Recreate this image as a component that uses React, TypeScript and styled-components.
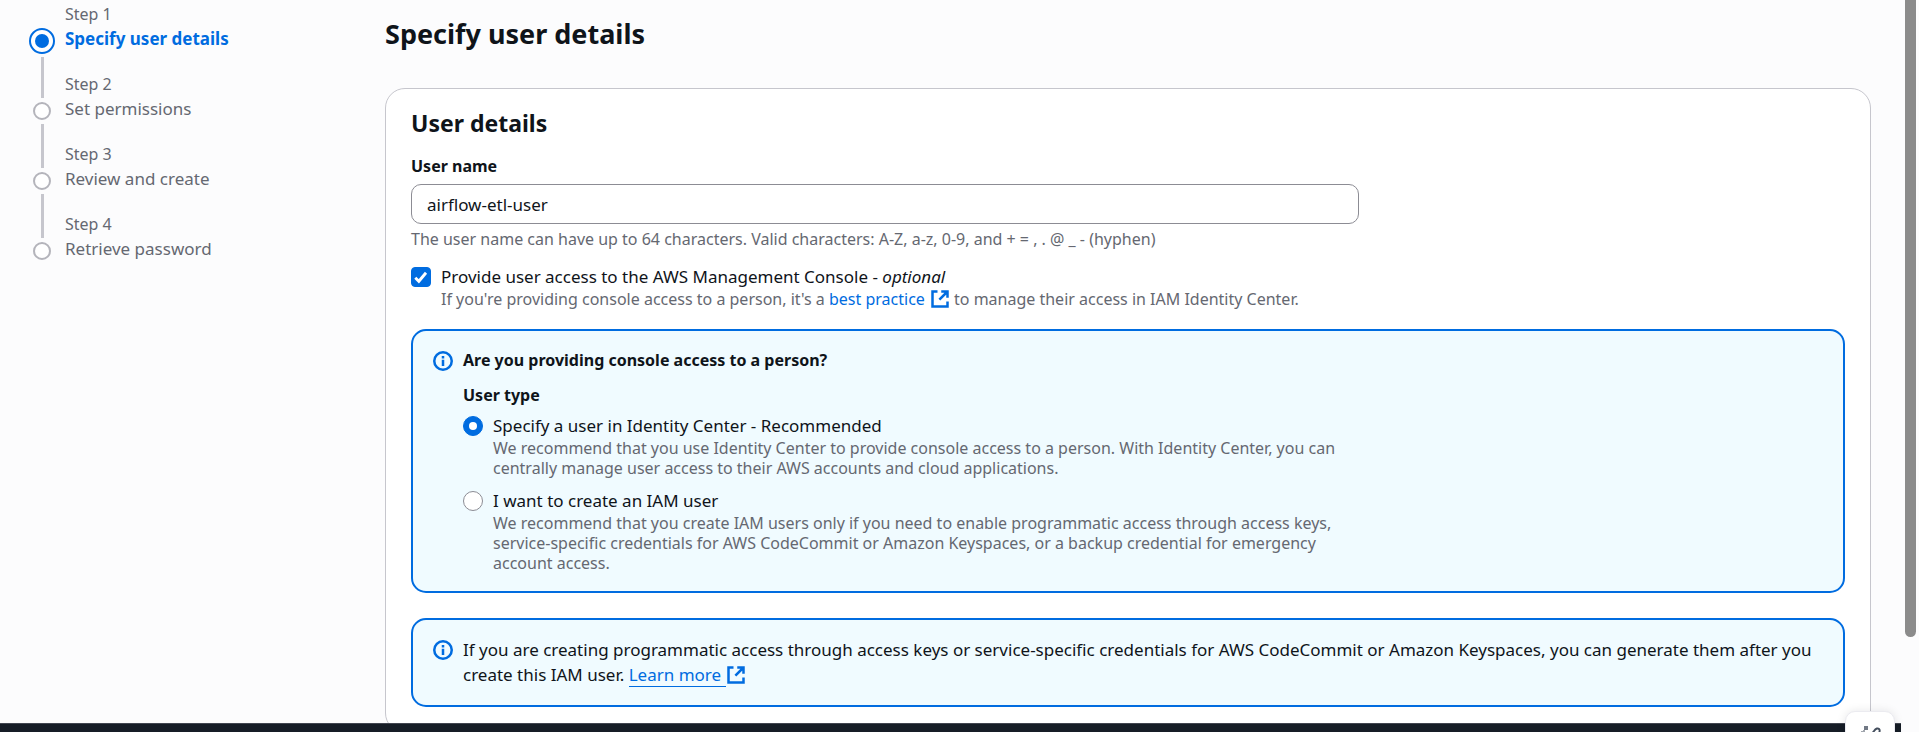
import React, { useState } from "react";
import styled, { createGlobalStyle, css } from "styled-components";

const color = {
  accent: "#006ce0",
  text: "#0f141a",
  muted: "#656871",
  line: "#c6c6cd",
  ring: "#b4b4bb",
  control: "#8c8c94",
  page: "#fcfcfd",
  info: "#f0fbff",
  footer: "#161d26",
};

const GlobalStyle = createGlobalStyle`
  *, *::before, *::after { box-sizing: border-box; }
  body {
    margin: 0;
    background: ${color.page};
    color: ${color.text};
    font: 17px/25px "Noto Sans", "Open Sans", sans-serif;
  }
  h1, h2, h3, p, ol, fieldset, legend { margin: 0; padding: 0; }
`;

const Shell = styled.div`
  display: flex;
  height: 100vh;
  overflow: hidden;
`;

const Screen = styled.div`
  position: relative;
  flex: 1;
  min-width: 0;
  display: flex;
  flex-direction: column;
`;

const Content = styled.div`
  flex: 1;
  min-height: 0;
  overflow: hidden;
  display: grid;
  grid-template-columns: 355px minmax(0, 1fr);
  column-gap: 30px;
  padding-right: 30px;
`;

const Steps = styled.ol`
  list-style: none;
  padding: 4px 0 0 29px;
`;

const Step = styled.li`
  display: grid;
  grid-template-columns: 26px 1fr;
  column-gap: 10px;
  height: 70px;
`;

const Marker = styled.div`
  display: flex;
  flex-direction: column;
  align-items: center;
`;

const Rail = styled.span<{ $grow?: boolean; $hidden?: boolean }>`
  width: 3px;
  background: ${(p) => (p.$hidden ? "transparent" : color.line)};
  ${(p) => (p.$grow ? "flex: 1;" : "height: 24px;")}
`;

const Dot = styled.span<{ $active?: boolean }>`
  flex: none;
  display: grid;
  place-items: center;
  width: 18px;
  height: 18px;
  margin: 4px 0;
  border: 2px solid ${color.ring};
  border-radius: 50%;
  background: #fff;
  ${(p) =>
    p.$active &&
    css`
      width: 26px;
      height: 26px;
      margin: 0 0 3px;
      border-color: ${color.accent};
      &::after {
        content: "";
        width: 14px;
        height: 14px;
        border-radius: 50%;
        background: ${color.accent};
      }
    `}
`;

const StepText = styled.div`
  display: flex;
  flex-direction: column;
  align-items: flex-start;
`;

const StepNumber = styled.span`
  font-size: 16px;
  line-height: 20px;
  color: ${color.muted};
`;

const StepLink = styled.a<{ $active?: boolean }>`
  margin-top: 2px;
  color: ${(p) => (p.$active ? color.accent : color.muted)};
  font-weight: ${(p) => (p.$active ? 700 : 400)};
  text-decoration: none;
`;

const Main = styled.main`
  min-width: 0;
  padding-top: 15px;
`;

const PageTitle = styled.h1`
  font-size: 27px;
  line-height: 38px;
  font-weight: 700;
`;

const Card = styled.section`
  margin-top: 35px;
  padding: 20px 25px 25px;
  border: 1px solid ${color.line};
  border-radius: 20px;
  background: #fff;
  display: flex;
  flex-direction: column;
`;

const CardTitle = styled.h2`
  font-size: 23px;
  line-height: 28px;
  font-weight: 700;
`;

const Field = styled.div`
  max-width: 948px;
  margin-top: 17px;
  display: flex;
  flex-direction: column;
`;

const FieldLabel = styled.label`
  font-size: 16px;
  font-weight: 700;
`;

const TextInput = styled.input`
  height: 40px;
  margin-top: 5px;
  padding: 0 15px;
  border: 1px solid ${color.control};
  border-radius: 10px;
  background: #fff;
  color: ${color.text};
  font: inherit;
`;

const Hint = styled.p`
  font-size: 16px;
  line-height: 20px;
  color: ${color.muted};
`;

const FieldHint = styled(Hint)`
  margin-top: 5px;
`;

const Option = styled.div`
  display: grid;
  grid-template-columns: 20px 1fr;
  column-gap: 10px;
`;

const ConsoleOption = styled(Option)`
  margin-top: 15px;
`;

const OptionBody = styled.div`
  min-width: 0;
`;

const OptionLabel = styled.label`
  display: block;
`;

const controlBox = css`
  appearance: none;
  display: grid;
  place-items: center;
  width: 20px;
  height: 20px;
  margin: 3px 0 0;
  border: 1px solid ${color.control};
  background: #fff;
  &:checked {
    border-color: ${color.accent};
    background: ${color.accent};
  }
`;

const CheckWrap = styled.span`
  display: grid;
  align-content: start;
  & > * {
    grid-area: 1 / 1;
  }
  svg {
    margin-top: 3px;
    pointer-events: none;
  }
`;

const Checkbox = styled.input`
  ${controlBox}
  border-radius: 4px;
`;

const Radio = styled.input`
  ${controlBox}
  border-radius: 50%;
  &:checked::after {
    content: "";
    width: 8px;
    height: 8px;
    border-radius: 50%;
    background: #fff;
  }
`;

const Link = styled.a<{ $underlined?: boolean }>`
  color: ${color.accent};
  text-decoration: none;
  svg {
    margin: ${(p) => (p.$underlined ? "3px 0 0" : "0 0 0 5px")};
    vertical-align: top;
  }
`;

const LinkText = styled.span`
  padding-right: 5px;
  border-bottom: 1px solid ${color.accent};
`;

const Alert = styled.div`
  display: grid;
  grid-template-columns: 20px minmax(0, 1fr);
  column-gap: 10px;
  padding: 17px 20px 18px;
  border: 2px solid ${color.accent};
  border-radius: 15px;
  background: ${color.info};
  margin-top: 20px;
  & + & {
    margin-top: 25px;
  }
  & > svg {
    margin-top: 3px;
  }
`;

const AlertTitle = styled.h3`
  font-size: 16px;
  line-height: 25px;
  font-weight: 700;
`;

const UserType = styled.fieldset`
  max-width: 888px;
  margin-top: 10px;
  border: 0;
  min-width: 0;
`;

const Legend = styled.legend`
  font-size: 16px;
  font-weight: 700;
`;

const Choices = styled.div`
  display: grid;
  row-gap: 10px;
  margin-top: 5px;
`;

const Footer = styled.footer`
  flex: none;
  height: 9px;
  border-top: 1px solid #424650;
  background: ${color.footer};
`;

const AssistantButton = styled.button`
  position: absolute;
  right: 6px;
  bottom: -29px;
  width: 50px;
  height: 50px;
  padding: 0;
  display: grid;
  place-items: center;
  border: 1px solid #ebebf0;
  border-radius: 10px;
  background: #fff;
  box-shadow: 0 0 10px rgba(15, 20, 26, 0.1);
`;

const ScrollTrack = styled.div`
  flex: none;
  width: 18px;
  padding-left: 4px;
  background: ${color.page};
`;

const ScrollThumb = styled.div`
  width: 11px;
  height: 87%;
  border-radius: 0 0 6px 6px;
  background: #8b8b8b;
`;

const ExternalIcon = () => (
  <svg width="20" height="20" viewBox="0 0 16 16" fill="none" stroke={color.accent} strokeWidth="2" aria-hidden="true">
    <path d="M6 2H2v12h12v-4M9 2h5v5M14 2 7.5 8.5" />
  </svg>
);

const InfoIcon = () => (
  <svg width="20" height="20" viewBox="0 0 16 16" fill="none" stroke={color.accent} strokeWidth="2" aria-hidden="true">
    <circle cx="8" cy="8" r="7" />
    <path d="M8 7v5M8 4v2" />
  </svg>
);

const CheckIcon = () => (
  <svg width="20" height="20" viewBox="0 0 14 14" fill="none" stroke="#fff" strokeWidth="2" aria-hidden="true">
    <path d="m3 7.5 2.5 2.5L10.5 4" />
  </svg>
);

const AssistantIcon = () => (
  <svg width="24" height="24" viewBox="0 0 24 24" fill="none" stroke="#424d5c" strokeWidth="2" aria-hidden="true">
    <path d="M7 2v4M9 2v4M6 3h4M6 5h4" strokeWidth="1" />
    <path d="M3 8h2M5 7h2M10 8v1" strokeWidth="1" />
    <path d="m8 18 8-11c2-3 4-3 5-2s1 3-1 5l-7 10Z" />
  </svg>
);

const steps = ["Specify user details", "Set permissions", "Review and create", "Retrieve password"];

const userTypes = [
  {
    id: "identity-center",
    label: "Specify a user in Identity Center - Recommended",
    hint: "We recommend that you use Identity Center to provide console access to a person. With Identity Center, you can centrally manage user access to their AWS accounts and cloud applications.",
  },
  {
    id: "iam-user",
    label: "I want to create an IAM user",
    hint: "We recommend that you create IAM users only if you need to enable programmatic access through access keys, service-specific credentials for AWS CodeCommit or Amazon Keyspaces, or a backup credential for emergency account access.",
  },
];

export default function App() {
  const [name, setName] = useState("airflow-etl-user");
  const [consoleAccess, setConsoleAccess] = useState(true);
  const [userType, setUserType] = useState("identity-center");

  return (
    <Shell>
      <GlobalStyle />
      <Screen>
        <Content>
          <nav aria-label="Steps">
            <Steps>
              {steps.map((title, i) => (
                <Step key={title}>
                  <Marker>
                    <Rail $hidden={i === 0} />
                    <Dot $active={i === 0} />
                    <Rail $grow $hidden={i === steps.length - 1} />
                  </Marker>
                  <StepText>
                    <StepNumber>Step {i + 1}</StepNumber>
                    <StepLink href="#" $active={i === 0} aria-current={i === 0 ? "step" : undefined}>
                      {title}
                    </StepLink>
                  </StepText>
                </Step>
              ))}
            </Steps>
          </nav>
          <Main>
            <PageTitle>Specify user details</PageTitle>
            <Card>
              <CardTitle>User details</CardTitle>
              <Field>
                <FieldLabel htmlFor="user-name">User name</FieldLabel>
                <TextInput id="user-name" type="text" value={name} onChange={(e) => setName(e.target.value)} />
                <FieldHint>
                  The user name can have up to 64 characters. Valid characters: A-Z, a-z, 0-9, and + = , . @ _ - (hyphen)
                </FieldHint>
              </Field>
              <ConsoleOption>
                <CheckWrap>
                  <Checkbox
                    id="console-access"
                    type="checkbox"
                    checked={consoleAccess}
                    onChange={(e) => setConsoleAccess(e.target.checked)}
                  />
                  {consoleAccess && <CheckIcon />}
                </CheckWrap>
                <OptionBody>
                  <OptionLabel htmlFor="console-access">
                    Provide user access to the AWS Management Console - <em>optional</em>
                  </OptionLabel>
                  <Hint>
                    If you're providing console access to a person, it's a{" "}
                    <Link href="#">
                      best practice
                      <ExternalIcon />
                    </Link>{" "}
                    to manage their access in IAM Identity Center.
                  </Hint>
                </OptionBody>
              </ConsoleOption>
              <Alert>
                <InfoIcon />
                <div>
                  <AlertTitle>Are you providing console access to a person?</AlertTitle>
                  <UserType>
                    <Legend>User type</Legend>
                    <Choices>
                      {userTypes.map((t) => (
                        <Option key={t.id}>
                          <Radio
                            id={t.id}
                            type="radio"
                            name="user-type"
                            checked={userType === t.id}
                            onChange={() => setUserType(t.id)}
                          />
                          <OptionBody>
                            <OptionLabel htmlFor={t.id}>{t.label}</OptionLabel>
                            <Hint>{t.hint}</Hint>
                          </OptionBody>
                        </Option>
                      ))}
                    </Choices>
                  </UserType>
                </div>
              </Alert>
              <Alert>
                <InfoIcon />
                <p>
                  If you are creating programmatic access through access keys or service-specific credentials for AWS
                  CodeCommit or Amazon Keyspaces, you can generate them after you create this IAM user.{" "}
                  <Link href="#" $underlined>
                    <LinkText>Learn more</LinkText>
                    <ExternalIcon />
                  </Link>
                </p>
              </Alert>
            </Card>
          </Main>
        </Content>
        <Footer />
        <AssistantButton type="button" aria-label="Open assistant">
          <AssistantIcon />
        </AssistantButton>
      </Screen>
      <ScrollTrack>
        <ScrollThumb />
      </ScrollTrack>
    </Shell>
  );
}
